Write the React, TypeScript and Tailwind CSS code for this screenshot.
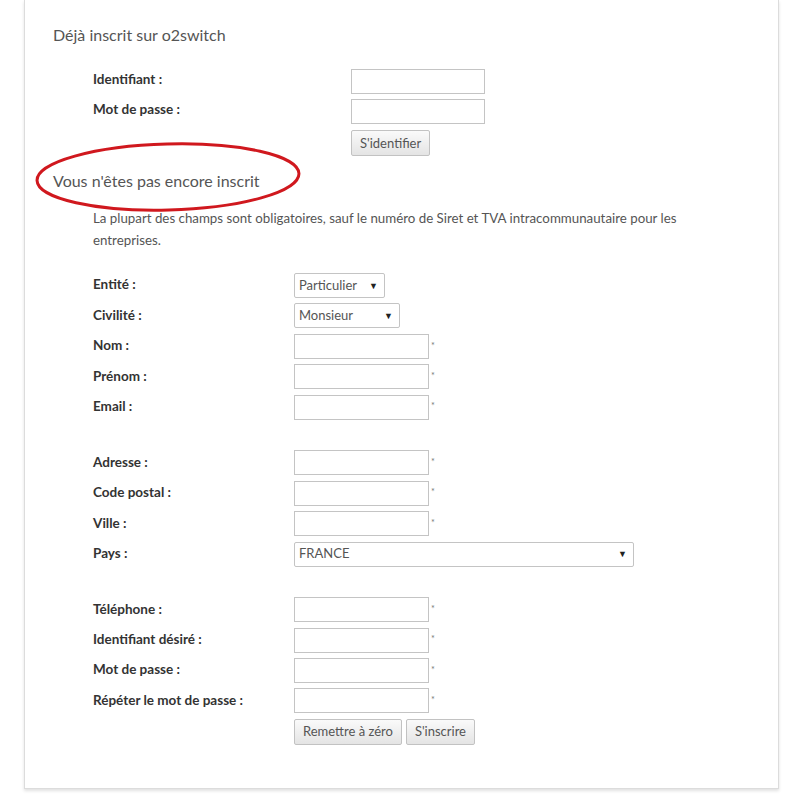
import React from 'react';

const font = { fontFamily: 'Lato, "Open Sans", sans-serif' };

function TextInput({ wide }: { wide?: boolean }) {
  return (
    <input
      type="text"
      className={`h-[25px] ${wide ? 'w-[134px]' : 'w-[135px]'} border border-[#c4c4c4] bg-white px-1 text-[13px] outline-none`}
    />
  );
}

function FakeSelect({ value, width }: { value: string; width: string }) {
  return (
    <div
      className={`flex h-[25px] ${width} items-center justify-between rounded-[2px] border border-[#c4c4c4] bg-white pl-[4px] pr-[6px] text-[13px] text-[#555]`}
    >
      <span>{value}</span>
      <span className="text-[9px] text-[#222]">▼</span>
    </div>
  );
}

function Btn({ children }: { children: React.ReactNode }) {
  return (
    <button className="h-[26px] rounded-[2px] border border-[#c2c2c2] bg-gradient-to-b from-[#fafafa] to-[#e4e4e4] px-[8px] text-[13px] leading-none text-[#555]">
      {children}
    </button>
  );
}

function Row({ label, children, star }: { label: string; children: React.ReactNode; star?: boolean }) {
  return (
    <div className="flex h-[25px] items-center">
      <div className="-mt-[2px] w-[201px] text-[13.5px] font-bold text-[#333]">{label}</div>
      {children}
      {star && <span className="ml-[2px] -mt-[2px] text-[9px] text-[#777]">*</span>}
    </div>
  );
}

export default function App() {
  return (
    <div className="relative min-h-[800px] bg-white" style={font}>
      <div className="ml-[24px] w-[755px] border border-t-0 border-[#dcdcdc] bg-white pb-[43px] pl-[28px] shadow-[0_2px_3px_rgba(0,0,0,0.12)]">
        <h2 className="pt-[25px] text-[16px] leading-[20px] text-[#555]">Déjà inscrit sur o2switch</h2>

        <div className="ml-[40px] mt-[24px] flex flex-col">
          <div className="flex h-[25px]">
            <div className="w-[258px] pt-[1px] text-[13.5px] font-bold leading-[18px] text-[#333]">Identifiant :</div>
            <TextInput wide />
          </div>
          <div className="mt-[5px] flex h-[25px]">
            <div className="w-[258px] pt-[1px] text-[13.5px] font-bold leading-[18px] text-[#333]">Mot de passe :</div>
            <TextInput wide />
          </div>
          <div className="mt-[6px] flex">
            <div className="w-[258px]" />
            <Btn>S'identifier</Btn>
          </div>
        </div>

        <h2 className="mt-[15px] text-[16px] leading-[20px] text-[#555]">Vous n'êtes pas encore inscrit</h2>

        <p className="ml-[40px] mt-[16px] w-[620px] text-[13.3px] leading-[22px] text-[#555]">
          La plupart des champs sont obligatoires, sauf le numéro de Siret et TVA intracommunautaire pour les
          entreprises.
        </p>

        <div className="ml-[40px] mt-[22px] flex flex-col gap-[5.4px]">
          <Row label="Entité :">
            <FakeSelect value="Particulier" width="w-[91px]" />
          </Row>
          <Row label="Civilité :">
            <FakeSelect value="Monsieur" width="w-[106px]" />
          </Row>
          <Row label="Nom :" star>
            <TextInput />
          </Row>
          <Row label="Prénom :" star>
            <TextInput />
          </Row>
          <Row label="Email :" star>
            <TextInput />
          </Row>
          <div className="h-[20px]" />
          <Row label="Adresse :" star>
            <TextInput />
          </Row>
          <Row label="Code postal :" star>
            <TextInput />
          </Row>
          <Row label="Ville :" star>
            <TextInput />
          </Row>
          <Row label="Pays :">
            <FakeSelect value="FRANCE" width="w-[340px]" />
          </Row>
          <div className="h-[20px]" />
          <Row label="Téléphone :" star>
            <TextInput />
          </Row>
          <Row label="Identifiant désiré :" star>
            <TextInput />
          </Row>
          <Row label="Mot de passe :" star>
            <TextInput />
          </Row>
          <Row label="Répéter le mot de passe :" star>
            <TextInput />
          </Row>
          <div className="flex">
            <div className="w-[201px]" />
            <div className="flex gap-[4px]">
              <Btn>Remettre à zéro</Btn>
              <Btn>S'inscrire</Btn>
            </div>
          </div>
        </div>
      </div>

      {/* red annotation circle */}
      <svg className="pointer-events-none absolute left-0 top-0" width="799" height="800">
        <ellipse
          cx="168"
          cy="177"
          rx="131"
          ry="33"
          fill="none"
          stroke="#d0181e"
          strokeWidth="3"
          transform="rotate(-1.5 168 177)"
        />
      </svg>
    </div>
  );
}
